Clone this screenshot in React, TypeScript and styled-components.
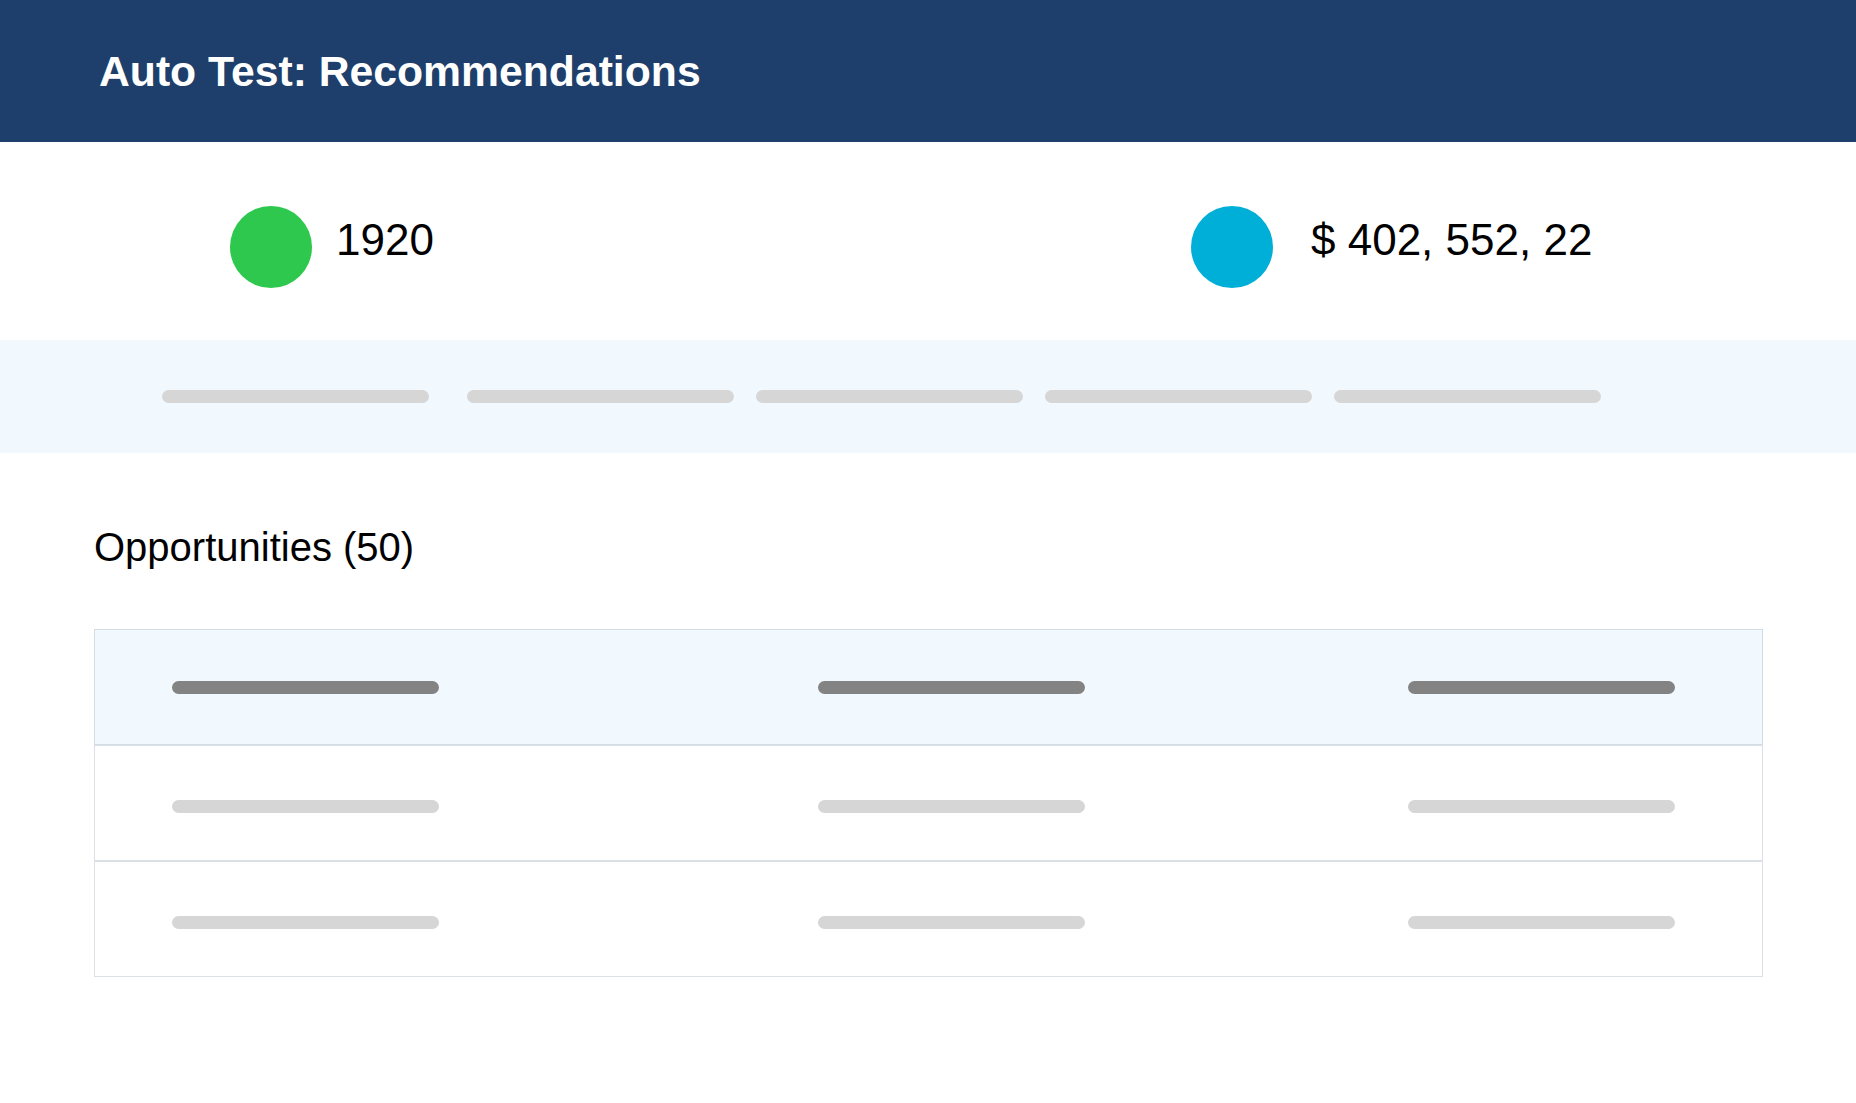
import React from "react";
import styled, { createGlobalStyle } from "styled-components";

const GlobalStyle = createGlobalStyle`
  html, body {
    margin: 0;
    padding: 0;
    background: #ffffff;
  }
  body {
    font-family: "Liberation Sans", Arial, Helvetica, sans-serif;
    color: #000000;
  }
  * { box-sizing: border-box; }
`;

const Page = styled.div`
  width: 1856px;
  min-height: 1103px;
  background: #ffffff;
  display: flex;
  flex-direction: column;
`;

const Header = styled.header`
  height: 142px;
  background: #1e3f6b;
  display: flex;
  align-items: center;
  padding-left: 99px;
`;

const Title = styled.h1`
  margin: 0;
  font-family: "Liberation Sans", Arial, Helvetica, sans-serif;
  font-weight: 700;
  font-size: 42.7px;
  color: #ffffff;
  letter-spacing: 0;
`;

const StatsRow = styled.section`
  height: 198px;
  display: grid;
  grid-template-columns: 961px auto;
  align-items: center;
  padding-left: 230px;
  padding-top: 2px;
  padding-bottom: 4px;
`;

const Stat = styled.div<{ $gap: number }>`
  display: flex;
  align-items: center;
  gap: ${(p) => p.$gap}px;
`;

const Dot = styled.span<{ $color: string }>`
  width: 82px;
  height: 82px;
  border-radius: 50%;
  background: ${(p) => p.$color};
  flex: none;
  margin-top: 13px;
`;

const StatValue = styled.span`
  font-size: 44px;
  font-weight: 400;
  line-height: 1.15;
`;

const Band = styled.section`
  height: 113px;
  background: #f1f8fe;
  display: flex;
  align-items: center;
  padding-left: 162px;
  gap: 22px;
`;

const Bar = styled.span<{ $tone: "light" | "dark"; $extra?: number }>`
  display: block;
  width: 267px;
  height: 13px;
  border-radius: 7px;
  flex: none;
  background: ${(p) => (p.$tone === "dark" ? "#838383" : "#d6d6d6")};
  margin-right: ${(p) => p.$extra ?? 0}px;
`;

const Content = styled.main`
  padding: 71px 93px 0 94px;
`;

const SectionTitle = styled.h2`
  margin: 0 0 59px 0;
  font-size: 40px;
  font-weight: 400;
  line-height: 46px;
`;

const Table = styled.div`
  width: 1669px;
  display: flex;
  flex-direction: column;
`;

const Row = styled.div<{ $head?: boolean }>`
  height: 116px;
  display: grid;
  grid-template-columns: 646px 590px 1fr;
  align-items: center;
  padding-left: 77px;
  padding-top: ${(p) => (p.$head ? 0 : 6)}px;
  background: ${(p) => (p.$head ? "#f1f8fe" : "#ffffff")};
  border: 1px solid ${(p) => (p.$head ? "#d3dde6" : "#dbe0e4")};
`;

const columns = [0, 1, 2];

export default function App() {
  return (
    <>
      <GlobalStyle />
      <Page>
        <Header>
          <Title>Auto Test: Recommendations</Title>
        </Header>
        <StatsRow>
          <Stat $gap={24}>
            <Dot $color="#2ec84e" />
            <StatValue>1920</StatValue>
          </Stat>
          <Stat $gap={38}>
            <Dot $color="#00afd8" />
            <StatValue>$ 402, 552, 22</StatValue>
          </Stat>
        </StatsRow>
        <Band>
          <Bar $tone="light" $extra={16} />
          <Bar $tone="light" />
          <Bar $tone="light" />
          <Bar $tone="light" />
          <Bar $tone="light" />
        </Band>
        <Content>
          <SectionTitle>Opportunities (50)</SectionTitle>
          <Table>
            <Row $head>
              {columns.map((c) => (
                <Bar key={c} $tone="dark" />
              ))}
            </Row>
            {[0, 1].map((r) => (
              <Row key={r}>
                {columns.map((c) => (
                  <Bar key={c} $tone="light" />
                ))}
              </Row>
            ))}
          </Table>
        </Content>
      </Page>
    </>
  );
}
